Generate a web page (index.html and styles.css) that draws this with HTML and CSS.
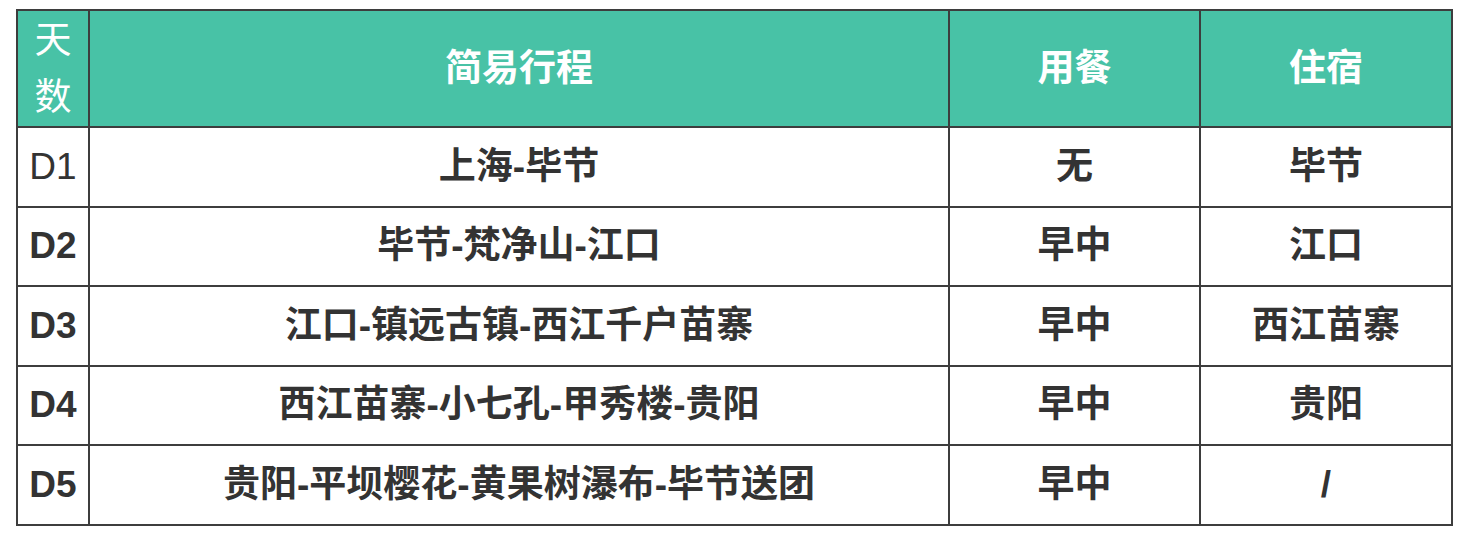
FILE: index.html
```html
<!DOCTYPE html>
<html lang="zh-CN">
<head>
<meta charset="utf-8">
<title>行程</title>
<link rel="stylesheet" href="styles.css">
</head>
<body>
<table class="trip">
  <colgroup>
    <col class="c-day">
    <col class="c-route">
    <col class="c-meal">
    <col class="c-stay">
  </colgroup>
  <thead>
    <tr>
      <th class="day-head">天数</th>
      <th>简易行程</th>
      <th>用餐</th>
      <th>住宿</th>
    </tr>
  </thead>
  <tbody>
    <tr><td class="day plain">D1</td><td>上海-毕节</td><td>无</td><td>毕节</td></tr>
    <tr><td class="day">D2</td><td>毕节-梵净山-江口</td><td>早中</td><td>江口</td></tr>
    <tr><td class="day">D3</td><td>江口-镇远古镇-西江千户苗寨</td><td>早中</td><td>西江苗寨</td></tr>
    <tr><td class="day">D4</td><td>西江苗寨-小七孔-甲秀楼-贵阳</td><td>早中</td><td>贵阳</td></tr>
    <tr><td class="day">D5</td><td>贵阳-平坝樱花-黄果树瀑布-毕节送团</td><td>早中</td><td>/</td></tr>
  </tbody>
</table>
</body>
</html>
```
FILE: styles.css
```css
html, body {
  margin: 0;
  padding: 0;
  background: #ffffff;
}
body {
  padding: 9px 0 0 16px;
  font-family: "Liberation Sans", "Noto Sans CJK SC", sans-serif;
  color: #333333;
}
.trip {
  border-collapse: collapse;
  table-layout: fixed;
  width: 1437px;
  font-size: 37px;
}
.c-day { width: 72px; }
.c-route { width: 860px; }
.c-meal { width: 251px; }
.c-stay { width: 252px; }
.trip th,
.trip td {
  border: 2px solid #3d3d3d;
  text-align: center;
  vertical-align: middle;
  padding: 0;
  font-weight: bold;
}
.trip th {
  background: #48c2a6;
  color: #ffffff;
  height: 115px;
  line-height: 57px;
}
.trip th.day-head {
  font-weight: normal;
  padding: 0 15px;
}
.trip td {
  height: 77.5px;
  line-height: 40px;
}
.trip td.plain {
  font-weight: normal;
}
```
